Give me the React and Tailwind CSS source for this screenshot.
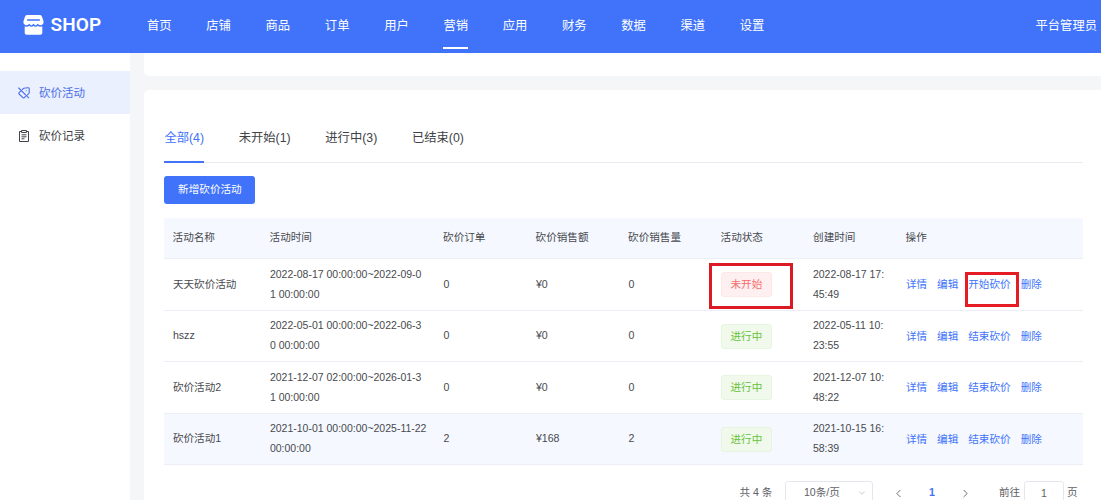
import React from 'react'
import { ChevronDown, ChevronLeft, ChevronRight } from 'lucide-react'

const NAV = ['首页', '店铺', '商品', '订单', '用户', '营销', '应用', '财务', '数据', '渠道', '设置']

const TABS = ['全部(4)', '未开始(1)', '进行中(3)', '已结束(0)']

const COLUMNS = ['活动名称', '活动时间', '砍价订单', '砍价销售额', '砍价销售量', '活动状态', '创建时间', '操作']

const ROWS = [
  {
    name: '天天砍价活动',
    time: ['2022-08-17 00:00:00~2022-09-0', '1 00:00:00'],
    orders: 0,
    amount: '¥0',
    sales: 0,
    started: false,
    created: ['2022-08-17 17:', '45:49']
  },
  {
    name: 'hszz',
    time: ['2022-05-01 00:00:00~2022-06-3', '0 00:00:00'],
    orders: 0,
    amount: '¥0',
    sales: 0,
    started: true,
    created: ['2022-05-11 10:', '23:55']
  },
  {
    name: '砍价活动2',
    time: ['2021-12-07 02:00:00~2026-01-3', '1 00:00:00'],
    orders: 0,
    amount: '¥0',
    sales: 0,
    started: true,
    created: ['2021-12-07 10:', '48:22']
  },
  {
    name: '砍价活动1',
    time: ['2021-10-01 00:00:00~2025-11-22', '00:00:00'],
    orders: 2,
    amount: '¥168',
    sales: 2,
    started: true,
    hover: true,
    created: ['2021-10-15 16:', '58:39']
  }
]

const GRID = 'grid grid-cols-[97px_173.5px_92.5px_92.5px_92.5px_92.5px_92.5px_1fr] items-center'

const ShopLogo = () => (
  <svg className="h-5 w-[21px]" viewBox="0 0 21 20" fill="none">
    <path d="M4.4 0h12.2c1.2 0 1.9.5 2.3 1.5l1.5 4.3c.5 1.7 0 3.1-1.1 4v8c0 1.2-.8 2-2 2H3.7c-1.2 0-2-.8-2-2v-8C.6 8.900.1 7.500.6 5.800l1.500-4.300C2.500.5 3.200 0 4.400 0z" fill="#fff" />
    <path d="M4.700 5h11.600" stroke="#4073fa" strokeWidth="1.500" strokeLinecap="round" />
    <path d="M.8 10.200c2 1.200 4.100 1 5.400-.4 1.500 1.800 2.900 1.800 4.300 0 1.400 1.800 2.800 1.800 4.300 0 1.300 1.400 3.400 1.600 5.400.4" stroke="#4073fa" strokeWidth="1.400" />
  </svg>
)

const BargainIcon = () => (
  <svg className="h-3 w-3" viewBox="0 0 12 12" fill="none" stroke="currentColor" strokeWidth="1.1" strokeLinecap="round" strokeLinejoin="round">
    <path d="M.7 1l10 9.800" />
    <path d="M4.300 2.500L5.700 1.300 10 .8c.8-.1 1.200.3 1.200 1v3.700c0 .4-.2.800-.5 1.100L9.400 8" />
    <path d="M2.600 4.200L1.100 5.700c-.4.400-.4.900 0 1.300l3.800 3.700c.4.400.9.400 1.300 0l1.300-1.200" />
    <path d="M8.200 3.700h.1" />
  </svg>
)

const RecordIcon = () => (
  <svg className="h-3 w-3" viewBox="0 0 12 12" fill="none" stroke="currentColor" strokeWidth="1">
    <path d="M3.500 1.500h-2v10h9v-10h-2" />
    <path d="M3.500.5h5v2h-5zM3.500 4.800h5M3.500 6.800h5M3.500 8.800h3" />
  </svg>
)

const Header = () => (
  <header className="flex h-[53px] shrink-0 items-start bg-[#4073fa] text-white">
    <div className="flex w-[147px] items-center pt-[11px] pl-[23px]">
      <ShopLogo />
      <span className="ml-[6.5px] font-[Roboto] text-[19px] leading-[27px] font-semibold tracking-[0.1px]">SHOP</span>
    </div>
    <nav className="flex gap-[34.7px] text-[12.3px]">
      {NAV.map((item) => (
        <span
          key={item}
          className={`h-[49px] w-[24.6px] border-b-2 leading-[52px] whitespace-nowrap ${item === '营销' ? 'border-white' : 'border-transparent'}`}
        >
          {item}
        </span>
      ))}
    </nav>
    <span className="mr-[4px] ml-auto text-[12.3px] leading-[52px]">平台管理员</span>
  </header>
)

const Sidebar = () => (
  <aside className="w-[130px] shrink-0 bg-white pt-[18px] text-[11.5px] text-[#404246]">
    <div className="flex h-[43px] items-center gap-[9.5px] bg-[#eaf0fe] pl-[17.5px] text-[#4a6ee8]">
      <BargainIcon />
      <span className="pt-[2px]">砍价活动</span>
    </div>
    <div className="flex h-[44px] items-center gap-[9.5px] pl-[17.5px]">
      <RecordIcon />
      <span className="pt-px">砍价记录</span>
    </div>
  </aside>
)

const StatusTag = ({ started }) => (
  <span
    className={`block h-[25px] w-[51px] rounded-[3px] border text-center leading-[23px] ${
      started ? 'border-[#e6f5df] bg-[#f0f9eb] text-[#67c23a]' : 'border-[#fde8e8] bg-[#fef0f0] text-[#f56c6c]'
    }`}
  >
    {started ? '进行中' : '未开始'}
  </span>
)

const Row = ({ row }) => (
  <div className={`${GRID} h-[51.5px] border-b border-[#ebeef5] pt-px ${row.hover ? 'bg-[#f5f8ff]' : ''}`}>
    <div className="pl-[8.5px]">{row.name}</div>
    <div className="pb-[2px] pl-[8.5px] text-[10.5px] leading-[20px] whitespace-nowrap">
      {row.time[0]}
      <br />
      {row.time[1]}
    </div>
    <div className="pl-[8.5px]">{row.orders}</div>
    <div className="pl-[8.5px]">{row.amount}</div>
    <div className="pl-[8.5px]">{row.sales}</div>
    <div className="relative pl-[8.5px]">
      <StatusTag started={row.started} />
      {!row.started && <span className="absolute -top-[9px] -left-[3.5px] h-[46px] w-[84px] border-3 border-[#dc1a25]" />}
    </div>
    <div className="pb-[2px] pl-[8px] text-[10.5px] leading-[20px] whitespace-nowrap">
      {row.created[0]}
      <br />
      {row.created[1]}
    </div>
    <div className="flex gap-[10px] pt-px pl-[8.5px] whitespace-nowrap text-[#4073fa]">
      <span>详情</span>
      <span>编辑</span>
      <span className="relative">
        {row.started ? '结束砍价' : '开始砍价'}
        {!row.started && <span className="absolute -top-[5.5px] -left-[3px] h-[35px] w-[54px] border-3 border-[#e51c23]" />}
      </span>
      <span>删除</span>
    </div>
  </div>
)

const Pagination = () => (
  <div className="mt-[16px] flex h-[24px] items-center text-[10.6px] text-[#606266]">
    <span className="ml-[575px] w-[45.5px] whitespace-nowrap">共 4 条</span>
    <div className="flex h-[24px] w-[88px] items-center justify-end rounded-[3px] border border-[#e4e7ed] pr-[5px]">
      <span className="mr-[17px]">10条/页</span>
      <ChevronDown className="h-[10px] w-[10px] text-[#c0c4cc]" strokeWidth={2} />
    </div>
    <ChevronLeft className="ml-[19px] h-[13px] w-[13px]" strokeWidth={1.7} />
    <span className="w-[54px] text-center font-bold text-[#4073fa]">1</span>
    <ChevronRight className="h-[13px] w-[13px]" strokeWidth={1.7} />
    <span className="ml-[27px] w-[25px]">前往</span>
    <span className="h-[24px] w-[40px] rounded-[3px] border border-[#e4e7ed] text-center leading-[22px]">1</span>
    <span className="ml-[3px]">页</span>
  </div>
)

const App = () => (
  <div className="flex h-[500px] w-[1101px] flex-col overflow-hidden bg-[#f5f6f8] font-['Liberation_Sans','Noto_Sans_CJK_SC',sans-serif]">
    <Header />
    <div className="flex min-h-0 flex-1">
      <Sidebar />
      <main className="ml-[14px] flex min-w-0 flex-1 flex-col">
        <div className="h-[23px] shrink-0 rounded-bl-[5px] bg-white" />
        <section className="mt-[14px] min-h-0 flex-1 rounded-tl-[5px] bg-white pt-[29px] pr-[18.5px] pl-[20.4px]">
          <div className="flex h-[44px] gap-[34.7px] border-b border-[#e9ebf0] text-[12.3px] leading-[38px] text-[#404246]">
            {TABS.map((tab, index) => (
              <span key={tab} className={index === 0 ? 'h-[44px] border-b-2 border-[#4073fa] text-[#4073fa]' : 'h-[44px]'}>
                {tab}
              </span>
            ))}
          </div>
          <button className="mt-[13px] block h-[28px] w-[91px] rounded-[3px] bg-[#4073fa] text-[10.6px] text-white">新增砍价活动</button>
          <div className="mt-[14px] text-[10.6px] text-[#484a4e]">
            <div className={`${GRID} h-[41px] border-b border-[#ebeef5] bg-[#f5f8ff]`}>
              {COLUMNS.map((column) => (
                <div key={column} className="pl-[8.2px]">
                  {column}
                </div>
              ))}
            </div>
            {ROWS.map((row) => (
              <Row key={row.name} row={row} />
            ))}
          </div>
          <Pagination />
        </section>
      </main>
    </div>
  </div>
)

export default App
